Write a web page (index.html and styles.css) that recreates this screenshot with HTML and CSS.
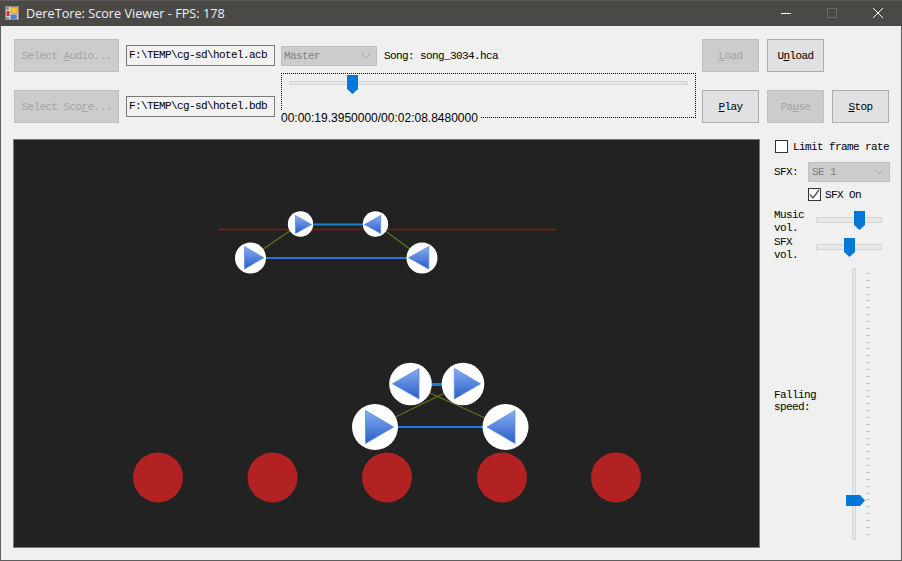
FILE: index.html
```html
<!DOCTYPE html>
<html lang="en">
<head>
<meta charset="utf-8">
<title>DereTore: Score Viewer - FPS: 178</title>
<link rel="stylesheet" href="styles.css">
</head>
<body>
<div class="window">
  <header class="titlebar">
    <svg class="app-icon" width="16" height="16" viewBox="0 0 16 16">
      <rect x="1.500" y="1.500" width="13" height="13" fill="#dcdcdc" stroke="#8a8a8a"/>
      <rect x="2" y="2" width="3" height="3" fill="#8f8f8f"/>
      <rect x="2.500" y="6" width="3" height="5" fill="#c9302c"/>
      <rect x="2" y="12" width="3" height="2" fill="#8f8f8f"/>
      <rect x="7" y="2.500" width="6.500" height="6" fill="#f2c230" stroke="#b98a10" stroke-width=".6"/>
      <rect x="7" y="10" width="5.500" height="3.500" fill="#4a86e0" stroke="#2d5fb0" stroke-width=".6"/>
    </svg>
    <span class="title">DereTore: Score Viewer - FPS: 178</span>
    <div class="caption">
      <svg class="cap-btn" width="46" height="26" viewBox="0 0 46 26"><path d="M18 13.500h10" stroke="#fff" stroke-width="1"/></svg>
      <svg class="cap-btn" width="46" height="26" viewBox="0 0 46 26"><rect x="18.500" y="8.500" width="9" height="9" fill="none" stroke="#6d6b68"/></svg>
      <svg class="cap-btn" width="46" height="26" viewBox="0 0 46 26"><path d="M18 8l10 10M28 8l-10 10" stroke="#fff" stroke-width="1"/></svg>
    </div>
  </header>

  <main class="content">
    <section class="controls">
      <button class="btn off ctl-a" disabled>Select <u>A</u>udio...</button>
      <div class="path ctl-b">F:\TEMP\cg-sd\hotel.acb</div>
      <div class="mid">
        <div class="mid-top">
          <div class="combo combo-master"><span>Master</span><svg width="10" height="6" viewBox="0 0 10 6"><path d="M.5.5L5 5 9.5.5" fill="none" stroke="#a6a6a6"/></svg></div>
          <span class="song">Song: song_3034.hca</span>
        </div>
        <div class="seek">
          <div class="track"></div>
          <svg class="thumb-seek" width="11" height="19" viewBox="0 0 11 19"><path d="M0 0h11v14l-5.500 5L0 14z" fill="#0078d7"/></svg>
          <span class="time">00:00:19.3950000/00:02:08.8480000</span>
        </div>
      </div>
      <button class="btn off ctl-load" disabled><u>L</u>oad</button>
      <button class="btn ctl-unload">U<u>n</u>load</button>
      <button class="btn off ctl-score" disabled>Select Sco<u>r</u>e...</button>
      <div class="path ctl-d">F:\TEMP\cg-sd\hotel.bdb</div>
      <button class="btn ctl-play"><u>P</u>lay</button>
      <button class="btn off ctl-pause" disabled>Pa<u>u</u>se</button>
      <button class="btn ctl-stop"><u>S</u>top</button>
    </section>

    <section class="lower">
      <div class="stage">
        <svg class="stage-svg" width="745" height="407" viewBox="14 140 745 407">
          <defs>
            <linearGradient id="note" x1="0" y1="0" x2="0" y2="1">
              <stop offset="0" stop-color="#86aef2"/>
              <stop offset="1" stop-color="#2a5cc4"/>
            </linearGradient>
          </defs>
          <rect x="14" y="140" width="745" height="407" fill="#222"/>
          <path d="M218 229.500H557" stroke="#8a1616" stroke-width="1.400"/>
          <g stroke="#5f7220" stroke-width="1.300" fill="none">
            <path d="M300 224L250 258M376 224L422 258M463 384L375 427M410 384L505 427"/>
          </g>
          <g stroke="#1f7ad8" fill="none">
            <path d="M300 224.500H376" stroke-width="2"/>
            <path d="M250 258H422" stroke-width="2"/>
            <path d="M410 384.500H463" stroke-width="3"/>
            <path d="M375 427H505" stroke-width="2"/>
          </g>
          <g fill="#b22222">
            <circle cx="158" cy="477.500" r="25"/>
            <circle cx="272.500" cy="477.500" r="25"/>
            <circle cx="387" cy="477.500" r="25"/>
            <circle cx="502" cy="477.500" r="25"/>
            <circle cx="616" cy="477.500" r="25"/>
          </g>
          <g fill="#fff">
            <circle cx="300.500" cy="224" r="12.700"/>
            <circle cx="375.500" cy="224" r="12.700"/>
            <circle cx="250.500" cy="258" r="15.500"/>
            <circle cx="422" cy="258" r="15.500"/>
            <circle cx="410.500" cy="384" r="21.300"/>
            <circle cx="463" cy="384" r="21.300"/>
            <circle cx="375" cy="427" r="23"/>
            <circle cx="505.500" cy="427" r="23"/>
          </g>
          <g fill="url(#note)" stroke="#5a8ce6" stroke-width=".8" stroke-linejoin="round">
            <path d="M295.500 215.500V233.500L311.500 224.500z"/>
            <path d="M380.700 215.500V233.500L364.500 224.500z"/>
            <path d="M244.500 246.500V269L263.800 257.800z"/>
            <path d="M428.800 246.500V269L408.500 257.800z"/>
            <path d="M419 368.500V399L392.500 383.800z"/>
            <path d="M454.300 368.500V399L480.500 383.800z"/>
            <path d="M365.500 410.500V443.500L393.800 427z"/>
            <path d="M515 410.500V443.500L487 427z"/>
          </g>
        </svg>
      </div>

      <aside class="side">
        <label class="check check-limit"><span class="box"></span><span>Limit frame rate</span></label>
        <div class="sfx-row">
          <span class="txt">SFX:</span>
          <div class="combo combo-sfx"><span>SE 1</span><svg width="10" height="6" viewBox="0 0 10 6"><path d="M.5.5L5 5 9.5.5" fill="none" stroke="#a6a6a6"/></svg></div>
        </div>
        <label class="check check-sfx"><span class="box"><svg width="11" height="11" viewBox="0 0 11 11"><path d="M1 5.500L4 9 10 1" fill="none" stroke="#555" stroke-width="1.400"/></svg></span><span>SFX On</span></label>
        <div class="vol-row vol-music">
          <span class="txt vol-label">Music vol.</span>
          <div class="hslider">
            <svg class="thumb-vol" width="11" height="19" viewBox="0 0 11 19"><path d="M0 0h11v14l-5.500 5L0 14z" fill="#0078d7"/></svg>
          </div>
        </div>
        <div class="vol-row vol-sfx">
          <span class="txt vol-label">SFX vol.</span>
          <div class="hslider">
            <svg class="thumb-sfx" width="11" height="19" viewBox="0 0 11 19"><path d="M0 0h11v14l-5.500 5L0 14z" fill="#0078d7"/></svg>
          </div>
        </div>
        <div class="speed">
          <span class="txt speed-label">Falling speed:</span>
          <div class="vslider">
            <div class="vtrack"></div>
            <svg class="thumb-speed" width="19" height="11" viewBox="0 0 19 11"><path d="M0 0h14l5 5.500-5 5.500H0z" fill="#0078d7"/></svg>
            <div class="ticks">
              <i></i><i></i><i></i><i></i><i></i><i></i><i></i><i></i><i></i><i></i>
              <i></i><i></i><i></i><i></i><i></i><i></i><i></i><i></i><i></i><i></i>
              <i></i><i></i><i></i><i></i><i></i><i></i><i></i><i></i><i></i><i></i>
              <i></i><i></i><i></i><i></i><i></i><i></i><i></i><i></i><i></i>
            </div>
          </div>
        </div>
      </aside>
    </section>
  </main>
</div>
</body>
</html>
```
FILE: styles.css
```css
* { box-sizing: border-box; }
html, body { margin: 0; padding: 0; }
body { width: 902px; height: 561px; overflow: hidden; background: #f0f0f0; }

.window {
  width: 902px;
  height: 561px;
  display: flex;
  flex-direction: column;
  border: 1px solid #5e5e5e;
  border-top: 0;
  background: #f0f0f0;
}

.titlebar {
  height: 26px;
  flex: none;
  background: #4b4946;
  box-shadow: inset 0 1px #5c5c5c;
  display: flex;
  align-items: center;
  padding-left: 4px;
  margin: 0 -1px;
}
.app-icon { flex: none; }
.title {
  margin-left: 6px;
  font: 12.7px/26px "Open Sans", "Noto Sans", sans-serif;
  color: #eaf2f8;
  white-space: nowrap;
}
.caption { margin-left: auto; display: flex; padding-right: 1px; }
.cap-btn { display: block; }

.content { flex: 1; padding: 13px 12px 0 12px; display: flex; flex-direction: column; }

.controls {
  display: grid;
  grid-template-columns: 105px 7px 149px 6px 415px 6px 57px 8px 57px 8px 57px;
  grid-template-rows: 33px 33px;
  row-gap: 18px;
  height: 84px;
  margin-left: 1px;
}
.ctl-a { grid-column: 1; grid-row: 1; }
.ctl-b { grid-column: 3; grid-row: 1; align-self: center; }
.mid { grid-column: 5; grid-row: 1 / span 2; }
.ctl-load { grid-column: 7; grid-row: 1; }
.ctl-unload { grid-column: 9; grid-row: 1; }
.ctl-score { grid-column: 1; grid-row: 2; }
.ctl-d { grid-column: 3; grid-row: 2; align-self: center; }
.ctl-play { grid-column: 7; grid-row: 2; }
.ctl-pause { grid-column: 9; grid-row: 2; }
.ctl-stop { grid-column: 11; grid-row: 2; }

.btn, .path, .combo, .song, .txt, .check {
  font-family: "Liberation Mono", "DejaVu Sans Mono", monospace;
  font-size: 11px;
  letter-spacing: -0.6px;
  color: #000;
}
.btn {
  padding: 0;
  background: #e1e1e1;
  border: 1px solid #adadad;
  text-align: center;
  margin: 0;
  border-radius: 0;
}
.btn.off { background: #cccccc; border-color: #bfbfbf; color: #a3a3a3; }

.path {
  height: 21px;
  border: 1px solid #7a7a7a;
  background: #f2f2f2;
  line-height: 19px;
  padding-left: 2px;
  white-space: nowrap;
}

.mid { display: flex; flex-direction: column; padding-top: 7px; }
.mid-top { display: flex; align-items: center; height: 20px; }
.combo {
  height: 20px;
  background: #cccccc;
  border: 1px solid #bfbfbf;
  color: #808080;
  display: flex;
  align-items: center;
  justify-content: space-between;
  padding: 0 5px 0 2px;
  flex: none;
}
.combo-master { width: 96px; }
.song { margin-left: 7px; white-space: pre; }

.seek {
  position: relative;
  margin-top: 7px;
  width: 415px;
  height: 45px;
  border: 1px dotted #000;
}
.track {
  position: absolute;
  left: 7px;
  right: 7px;
  top: 7px;
  height: 4px;
  background: #e7e7e7;
  border: 1px solid #d6d6d6;
}
.thumb-seek { position: absolute; left: 65px; top: 1px; }
.time {
  position: absolute;
  left: -1px;
  top: 37px;
  padding-right: 3px;
  background: #f0f0f0;
  font: 12px/15px "Liberation Sans", Arial, sans-serif;
  color: #000;
  white-space: nowrap;
}

.lower { display: flex; margin-top: 16px; }
.stage { width: 747px; height: 409px; border: 1px solid #7a7a7a; flex: none; }
.stage-svg { display: block; }

.side { width: 116px; margin-left: 14px; display: flex; flex-direction: column; }

.check { display: flex; align-items: center; white-space: nowrap; }
.box {
  width: 13px;
  height: 13px;
  border: 1px solid #333;
  background: #fff;
  margin-right: 4px;
  display: flex;
  align-items: center;
  justify-content: center;
  flex: none;
}
.check-limit { margin-left: 1px; height: 13px; margin-top: 1px; }
.check-limit .box { margin-right: 5px; }
.sfx-row { display: flex; align-items: center; margin-top: 9px; height: 20px; }
.sfx-row .txt { width: 34px; }
.combo-sfx { width: 82px; padding-left: 3px; }
.check-sfx { margin-left: 34px; margin-top: 6px; height: 13px; }

.vol-row { display: flex; }
.vol-music { margin-top: 10px; height: 27px; }
.vol-sfx { height: 26px; }
.vol-label { width: 42px; line-height: 13px; margin-top: -2px; flex: none; }
.hslider { position: relative; width: 66px; }
.hslider::before {
  content: "";
  position: absolute;
  left: 0;
  right: 0;
  top: 6px;
  height: 4px;
  background: #e7e7e7;
  border: 1px solid #d6d6d6;
}
.thumb-vol { position: absolute; left: 38px; top: 0; }
.thumb-sfx { position: absolute; left: 28px; top: 0; }

.speed { display: flex; height: 272px; margin-top: 4px; }
.speed-label { width: 78px; line-height: 12px; margin-top: 121px; flex: none; }
.vslider { position: relative; flex: 1; }
.vtrack {
  position: absolute;
  left: 0;
  top: 0;
  bottom: 0;
  width: 4px;
  background: #e7e7e7;
  border: 1px solid #d6d6d6;
}
.thumb-speed { position: absolute; left: -6px; top: 227px; }
.ticks {
  position: absolute;
  left: 14px;
  top: 5px;
  height: 262px;
  display: flex;
  flex-direction: column;
  justify-content: space-between;
}
.ticks i { display: block; width: 4px; height: 1px; background: #c4c4c4; }
```
